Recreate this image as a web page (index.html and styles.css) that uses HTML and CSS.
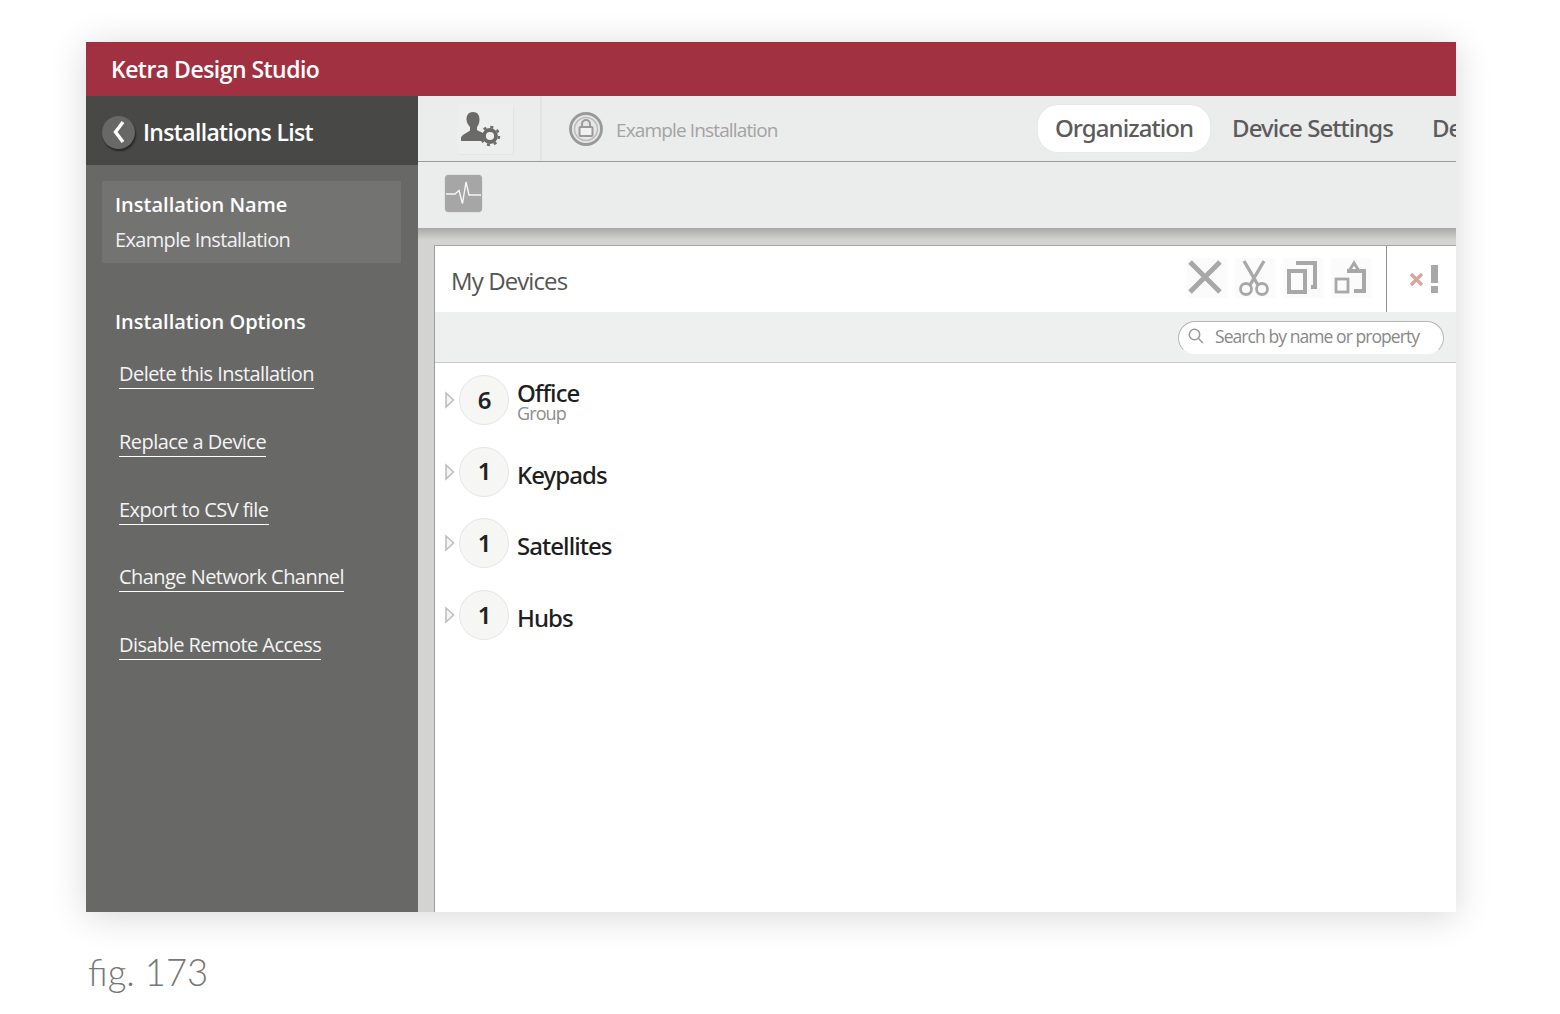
FILE: index.html
```html
<!DOCTYPE html>
<html lang="en">
<head>
<meta charset="utf-8">
<title>Ketra Design Studio</title>
<link rel="stylesheet" href="styles.css">
</head>
<body>
<main class="figure">
  <div class="app">
    <header class="titlebar">Ketra Design Studio</header>
    <div class="workspace">
      <aside class="sidebar">
        <div class="side-head">
          <span class="back"><svg width="18" height="26" viewBox="0 0 18 26"><path d="M13 3 5.500 13l7.500 10" fill="none" stroke="#fff" stroke-width="3.400"/></svg></span>
          <span class="side-title">Installations List</span>
        </div>
        <div class="name-card">
          <div class="name-label">Installation Name</div>
          <div class="name-value">Example Installation</div>
        </div>
        <div class="options-title">Installation Options</div>
        <nav class="options">
          <a class="option">Delete this Installation</a>
          <a class="option">Replace a Device</a>
          <a class="option">Export to CSV file</a>
          <a class="option">Change Network Channel</a>
          <a class="option">Disable Remote Access</a>
        </nav>
      </aside>
      <section class="main">
        <div class="topbar">
          <div class="user-btn">
            <span class="user-tile">
            <svg class="soft" width="42" height="36" viewBox="0 0 42 36"><path d="M13 1c4.500 0 6.500 3 6.500 7.500 0 3-1 5.500-2.500 7.500v3c2 1.500 5 2 6.500 3.500V30H1v-3c0-3 6-5 9-7.500V16C8.500 14 6.500 11.500 6.500 8.500 6.500 4 8.500 1 13 1z" fill="#6a6a68"/><circle cx="30" cy="25" r="6" fill="none" stroke="#6a6a68" stroke-width="3.800"/><circle cx="30" cy="25" r="9" fill="none" stroke="#6a6a68" stroke-width="2.400" stroke-dasharray="3 4.070"/></svg>
            </span>
          </div>
          <div class="install">
            <svg class="soft" width="36" height="36" viewBox="0 0 36 36"><circle cx="18" cy="18" r="15.500" fill="#e6e6e6" stroke="#999" stroke-width="2.800"/><circle cx="18" cy="18" r="11.500" fill="none" stroke="#bbb" stroke-width="1.500"/><rect x="11.500" y="16" width="13" height="9" rx="1" fill="#f1f1f1" stroke="#999" stroke-width="2"/><path d="M14 16v-3a4 4 0 0 1 8 0v3" fill="none" stroke="#999" stroke-width="2"/></svg>
            <span class="install-name">Example Installation</span>
          </div>
          <div class="tabs">
            <span class="tab active">Organization</span>
            <span class="tab">Device Settings</span>
            <span class="tab">Device Groups</span>
          </div>
        </div>
        <div class="toolbar">
          <span class="pulse"><svg width="37" height="37" viewBox="0 0 37 37"><path d="M1 19h9l4-3.500 3.500 13L21 7l3 13h12" fill="none" stroke="#fff" stroke-width="1.400" opacity=".9"/></svg></span>
        </div>
        <div class="content">
          <div class="panel">
            <div class="panel-head">
              <h2 class="panel-title">My Devices</h2>
              <div class="tools">
                <span class="tool"><svg class="soft" width="40" height="40" viewBox="0 0 40 40"><path d="M3 4l30 30M33 4 3 34" stroke="#a8a8a8" stroke-width="5" fill="none"/></svg></span>
                <span class="tool"><svg class="soft" width="40" height="40" viewBox="0 0 40 40"><path d="M9 3l14 24M29 3 15 27" stroke="#a8a8a8" stroke-width="3.400" fill="none"/><circle cx="11" cy="31" r="5.500" fill="none" stroke="#a8a8a8" stroke-width="2.800"/><circle cx="27" cy="31" r="5.500" fill="none" stroke="#a8a8a8" stroke-width="2.800"/></svg></span>
                <span class="tool"><svg class="soft" width="40" height="40" viewBox="0 0 40 40"><path d="M13 5h19v24h-4" fill="none" stroke="#a8a8a8" stroke-width="4"/><rect x="6" y="13" width="16" height="21" fill="none" stroke="#a8a8a8" stroke-width="4"/></svg></span>
                <span class="tool"><svg class="soft" width="40" height="40" viewBox="0 0 40 40"><path d="M16 13h17v20H23" fill="none" stroke="#a8a8a8" stroke-width="4"/><path d="M18 13l5-8 5 8" fill="none" stroke="#a8a8a8" stroke-width="3"/><rect x="5" y="21" width="12" height="13" fill="none" stroke="#a8a8a8" stroke-width="2.800"/></svg></span>
              </div>
              <div class="alerts">
                <svg class="soft" width="40" height="40" viewBox="0 0 40 40"><path d="M5 15l11 11M16 15 5 26" stroke="#d7a59c" stroke-width="3.200" fill="none"/><rect x="25" y="6" width="7" height="18" fill="#a8a8a8"/><rect x="25" y="27" width="7" height="7" fill="#a8a8a8"/></svg>
              </div>
            </div>
            <div class="searchbar">
              <div class="search">
                <svg class="soft" width="18" height="18" viewBox="0 0 18 18"><circle cx="7.500" cy="7.500" r="5.200" fill="none" stroke="#999" stroke-width="1.500"/><path d="M11.500 11.500 16 16" stroke="#999" stroke-width="1.500"/></svg>
                <span class="search-text">Search by name or property</span>
              </div>
            </div>
            <ul class="tree">
              <li class="node first">
                <svg class="caret" width="10" height="18" viewBox="0 0 10 18"><path d="M1 2l7.500 7L1 16z" fill="#f4f4f4" stroke="#bdbdbd" stroke-width="1.500"/></svg><span class="count">6</span>
                <span class="label-stack"><span class="node-label">Office</span><span class="node-sub">Group</span></span>
              </li>
              <li class="node">
                <svg class="caret" width="10" height="18" viewBox="0 0 10 18"><path d="M1 2l7.500 7L1 16z" fill="#f4f4f4" stroke="#bdbdbd" stroke-width="1.500"/></svg><span class="count">1</span><span class="node-label">Keypads</span>
              </li>
              <li class="node">
                <svg class="caret" width="10" height="18" viewBox="0 0 10 18"><path d="M1 2l7.500 7L1 16z" fill="#f4f4f4" stroke="#bdbdbd" stroke-width="1.500"/></svg><span class="count">1</span><span class="node-label">Satellites</span>
              </li>
              <li class="node">
                <svg class="caret" width="10" height="18" viewBox="0 0 10 18"><path d="M1 2l7.500 7L1 16z" fill="#f4f4f4" stroke="#bdbdbd" stroke-width="1.500"/></svg><span class="count">1</span><span class="node-label">Hubs</span>
              </li>
            </ul>
          </div>
        </div>
      </section>
    </div>
  </div>
  <p class="caption">fig. 173</p>
</main>
</body>
</html>
```
FILE: styles.css
```css
* { box-sizing: border-box; }
html, body { margin: 0; padding: 0; background: #fff; }
body { width: 1560px; height: 1014px; overflow: hidden; font-family: "Open Sans", "Noto Sans", sans-serif; }
.soft { filter: blur(.45px); display: block; }
.figure { padding: 42px 104px 0 86px; }
.app { width: 1370px; height: 870px; display: flex; flex-direction: column; box-shadow: 0 4px 34px rgba(0,0,0,.16); background: #fff; }
.titlebar { height: 54px; flex: none; background: #a13140; color: #fff; font-size: 23px; font-weight: 600; letter-spacing: -.53px; padding: 12px 0 0 25px; line-height: 31px; }
.workspace { flex: 1; display: flex; min-height: 0; }
.sidebar { width: 332px; flex: none; background: #686866; color: #fff; }
.side-head { height: 69px; background: #484846; display: flex; align-items: center; padding: 3px 0 0 16px; gap: 8px; }
.back { width: 33px; height: 33px; border-radius: 50%; background: #686866; box-shadow: 1px 2px 2px rgba(0,0,0,.5); display: flex; align-items: center; justify-content: center; }
.side-title { font-size: 23px; font-weight: 600; letter-spacing: -.67px; line-height: 32px; }
.name-card { margin: 16px 17px 0 16px; height: 82px; background: #737372; padding: 10px 13px; }
.name-label { font-size: 20px; font-weight: 600; letter-spacing: 0; line-height: 27px; }
.name-value { font-size: 20px; letter-spacing: -.65px; line-height: 27px; margin-top: 8px; color: #f1f1f1; }
.options-title { font-size: 20px; font-weight: 600; letter-spacing: 0; line-height: 27px; margin: 45px 0 0 29px; }
.options { display: flex; flex-direction: column; align-items: flex-start; gap: 30.750px; margin: 17px 0 0 33px; }
.option { display: block; font-size: 20px; letter-spacing: -.55px; line-height: 27px; height: 37px; padding-top: 8px; border-bottom: 1px solid #fff; color: #f4f4f4; }
.main { flex: 1; min-width: 0; display: flex; flex-direction: column; overflow: hidden; }
.topbar { height: 66px; flex: none; background: #ebecec; border-bottom: 1px solid #9b9b9b; display: flex; align-items: center; }
.user-btn { width: 124px; height: 65px; flex: none; border-right: 2px solid #e3e4e4; display: flex; align-items: center; padding-left: 39px; }
.user-tile { width: 56px; height: 50px; padding: 7px 0 0 3px; background: #edeeee; border-radius: 3px; box-shadow: 1px 1px 1px #e4e5e5; }
.install { display: flex; align-items: center; gap: 12px; margin-left: 26px; width: 470px; flex: none; height: 36px; padding-top: 1px; }
.install-name { font-size: 19px; letter-spacing: -.86px; color: #a3a3a3; position: relative; top: 1px; }
.tabs { display: flex; align-items: center; gap: 5px; white-space: nowrap; }
.tab { font-family: "Noto Sans", sans-serif; font-size: 24px; font-weight: 500; letter-spacing: -.95px; color: #5b5b5b; padding: 6px 17px 7px; line-height: 34px; height: 47px; }
.tab.active { background: #fff; border-radius: 20px; box-shadow: 0 0 2px #e0e0e0; }
.toolbar { height: 66px; flex: none; background: #ebecec; padding: 13px 0 0 27px; }
.pulse { display: block; width: 37px; height: 37px; border-radius: 4px; background: #a6a6a6; box-shadow: 0 0 1px #999; }
.content { flex: 1; min-height: 0; background: #d3d3d1; padding: 17px 0 0 16px; background-image: linear-gradient(#a9a9a9, #d3d3d1 12px); }
.panel { height: 100%; background: #fff; border-left: 1px solid #9b9b9b; border-top: 1px solid #a4a4a4; }
.panel-head { height: 66px; display: flex; align-items: center; padding-left: 16px; background: #fff; }
.panel-title { margin: 0; font-size: 24px; font-weight: 400; letter-spacing: -.9px; color: #555; flex: 1; padding-top: 2px; }
.tools { display: flex; gap: 8px; margin-right: 15px; margin-bottom: 3px; }
.tool { display: block; width: 40px; height: 40px; background: #fbfbfb; }
.alerts { width: 70px; height: 66px; border-left: 1px solid #8f8f8f; padding: 13px 0 0 19px; flex: none; }
.searchbar { height: 51px; background: #eef0ef; border-bottom: 1px solid #c9c9c9; padding: 9px 12px 0 0; display: flex; justify-content: flex-end; }
.search { width: 266px; height: 34px; border-radius: 17px; background: #fff; border: 1px solid #b5b5b5; border-bottom-color: #f1f1f1; display: flex; align-items: center; gap: 10px; padding: 0 0 4px 8px; }
.search-text { font-size: 17.500px; letter-spacing: -.93px; color: #888; }
.tree { list-style: none; margin: 0; padding: 0 0 0 10px; }
.node { display: flex; align-items: center; height: 50px; margin-bottom: 21.700px; }
.node.first { margin-top: 12px; }
.caret { margin-right: 4px; flex: none; display: block; }
.count { width: 50px; height: 50px; border-radius: 50%; background: #f6f6f5; border: 1px solid #e6e6e6; font-family: "Noto Sans", sans-serif; font-size: 24px; font-weight: 600; color: #222; display: flex; align-items: center; justify-content: center; margin-right: 8px; flex: none; padding: 0 0 2px 1px; }
.node-label { font-family: "Noto Sans", sans-serif; font-size: 24px; font-weight: 500; letter-spacing: -.95px; color: #1e1e1e; line-height: 30px; padding-top: 6px; }
.label-stack { display: flex; flex-direction: column; padding-top: 4px; }
.label-stack .node-label { padding-top: 0; line-height: 22px; }
.node-sub { font-size: 18px; font-weight: 500; letter-spacing: -.9px; color: #8c8c8c; line-height: 18px; }
.caption { margin: 38px 0 0 2px; font-family: "Lato", sans-serif; font-weight: 300; font-size: 36.500px; line-height: 44px; color: #777; }
```
